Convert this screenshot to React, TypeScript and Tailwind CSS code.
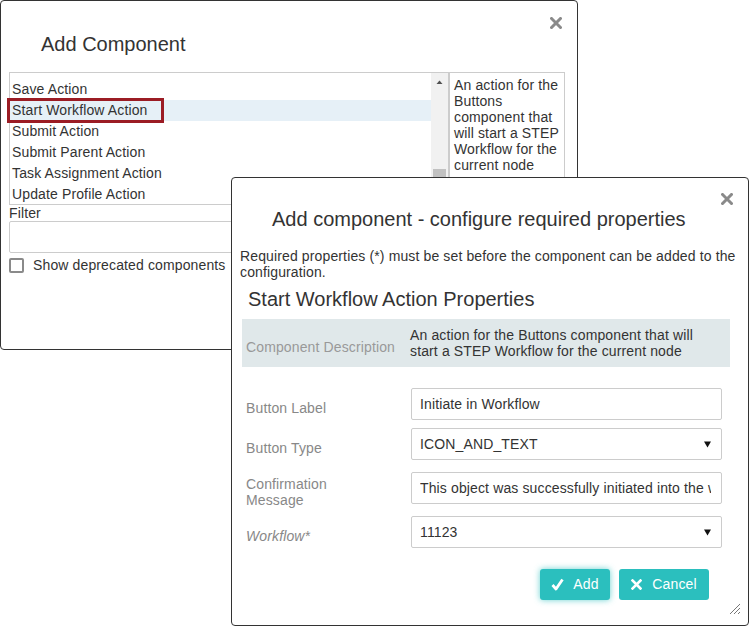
import React from "react";

const font = { fontFamily: '"Liberation Sans", Arial, sans-serif' };

function CloseIcon() {
  return (
    <svg width="12" height="12" viewBox="0 0 12 12" className="block">
      <path d="M1.5 1.5 L10.5 10.5 M10.5 1.5 L1.5 10.5" stroke="#8a8a8a" strokeWidth="3" strokeLinecap="square" />
    </svg>
  );
}

function Caret() {
  return (
    <svg width="7" height="7" viewBox="0 0 7 7" className="block">
      <path d="M0 0.5 H7 L3.5 6.5 Z" fill="#111" />
    </svg>
  );
}

const items = ["Run Business Action", "Save Action", "Start Workflow Action", "Submit Action", "Submit Parent Action", "Task Assignment Action", "Update Profile Action"];

function FormRow({ label, children, italic = false }: { label: React.ReactNode; children: React.ReactNode; italic?: boolean }) {
  return (
    <div className="flex items-center">
      <div className={`w-[169px] pl-[4px] pt-2 text-[14px] leading-[16px] text-[#888] ${italic ? "italic" : ""}`}>{label}</div>
      <div className="w-[311px]">{children}</div>
    </div>
  );
}

function TextBox({ value, select = false }: { value: string; select?: boolean }) {
  return (
    <div className="flex h-[32px] items-center overflow-hidden whitespace-nowrap rounded-[2px] border border-[#ccc] bg-white pl-[8px] pr-[10px] text-[14px] text-[#333]">
      <span className="flex-1 overflow-hidden">{value}</span>
      {select && <Caret />}
    </div>
  );
}

export default function App() {
  return (
    <div className="relative h-[626px] w-[749px] overflow-hidden bg-white tracking-[0.13px] text-[#333]" style={font}>
      {/* first dialog */}
      <div className="absolute left-0 top-0 h-[350px] w-[578px] rounded border border-[#333] bg-white">
        <div className="absolute right-[15px] top-[16px]">
          <CloseIcon />
        </div>
        <h1 className="pl-[40px] pt-[29px] text-[20px] leading-[28px] tracking-normal">Add Component</h1>

        <div className="ml-[8px] mt-[14px] flex">
          <div className="relative h-[133px] w-[440px] overflow-hidden border border-[#ccc]">
            <div className="-mt-[15px] mr-[17px]">
              {items.map((it) => (
                <div
                  key={it}
                  className={`h-[21px] pl-[2px] text-[14px] leading-[20px] ${it === "Start Workflow Action" ? "bg-[#e6f0f7]" : ""}`}
                >
                  {it}
                </div>
              ))}
            </div>
            <div className="absolute bottom-0 right-0 top-0 w-[17px] bg-[#f1f1f1]">
              <svg width="17" height="12" viewBox="0 0 17 12" className="mt-[3px] block">
                <path d="M5.5 8 L8.5 4.5 L11.5 8 Z" fill="#505050" />
              </svg>
              <div className="absolute left-[2px] top-[96px] h-[40px] w-[13px] bg-[#c1c1c1]" />
            </div>
          </div>
          <div className="h-[133px] w-[116px] border border-[#ccc] pl-[4px] pt-[4px] text-[14px] leading-[16px]">
            An action for the Buttons component that will start a STEP Workflow for the current node
          </div>
        </div>

        <div className="ml-[8px] text-[14px] leading-[16px]">Filter</div>
        <div className="ml-[8px] h-[32px] w-[556px] rounded-[2px] border border-[#ccc]" />
        <div className="ml-[8px] mt-[4px] flex items-center gap-[9px] text-[14px] leading-[16px]">
          <span className="h-[15px] w-[15px] rounded-[2px] border-2 border-[#8a8a8a]" />
          <span>Show deprecated components</span>
        </div>

        {/* selection annotation */}
        <div className="absolute left-[6px] top-[97px] h-[25px] w-[157px] border-[3px] border-[#9b1c24]" />
      </div>

      {/* second dialog */}
      <div className="absolute left-[231px] top-[177px] h-[449px] w-[518px] rounded border border-[#333] bg-white">
        <div className="absolute right-[15px] top-[15px]">
          <CloseIcon />
        </div>
        <h2 className="pl-[40px] pt-[27px] text-[20px] leading-[28px] tracking-normal">Add component - configure required properties</h2>
        <p className="mt-[15px] w-[508px] pl-[8px] text-[14px] leading-[16px]">
          Required properties (*) must be set before the component can be added to the configuration.
        </p>
        <h3 className="mt-[7px] pl-[16px] text-[20px] leading-[24px] tracking-normal">Start Workflow Action Properties</h3>

        <div className="ml-[10px] mt-[8px] flex h-[48px] w-[488px] items-center bg-[#e0e8ea]">
          <div className="w-[168px] pl-[4px] pt-2 text-[14px] leading-[16px] text-[#999]">Component Description</div>
          <div className="w-[295px] text-[14px] leading-[16px]">
            An action for the Buttons component that will start a STEP Workflow for the current node
          </div>
        </div>

        <div className="ml-[10px] mt-[21px] flex flex-col gap-2">
          <FormRow label="Button Label">
            <TextBox value="Initiate in Workflow" />
          </FormRow>
          <FormRow label="Button Type">
            <TextBox value="ICON_AND_TEXT" select />
          </FormRow>
          <FormRow
            label={
              <>
                Confirmation
                <br />
                Message
              </>
            }
          >
            <TextBox value="This object was successfully initiated into the workflow" />
          </FormRow>
          <FormRow label="Workflow*" italic>
            <TextBox value="11123" select />
          </FormRow>
        </div>

        <div className="mt-[21px] flex justify-end gap-[9px] pr-[39px]">
          <button className="flex h-[31px] w-[70px] items-center justify-center gap-[9px] rounded-[3px] bg-[#2bbfbe] text-[14px] text-white shadow-[0_0_6px_rgba(43,191,190,0.7)]">
            <svg width="13" height="13" viewBox="0 0 13 13" className="block">
              <path d="M1.5 7 L5 11 L11.5 1.5" stroke="#fff" strokeWidth="2.8" fill="none" strokeLinejoin="round" />
            </svg>
            Add
          </button>
          <button className="flex h-[31px] w-[90px] items-center justify-center gap-[10px] rounded-[3px] bg-[#2bbfbe] text-[14px] text-white">
            <svg width="11" height="11" viewBox="0 0 11 11" className="block">
              <path d="M1.5 1.5 L9.5 9.5 M9.5 1.5 L1.5 9.5" stroke="#fff" strokeWidth="2.6" strokeLinecap="square" />
            </svg>
            Cancel
          </button>
        </div>

        <svg width="12" height="12" viewBox="0 0 12 12" className="absolute bottom-[10px] right-[7px]">
          <path d="M11 1 L1 11 M11 5 L5 11 M11 9 L9 11" stroke="#777" strokeWidth="1" />
        </svg>
      </div>
    </div>
  );
}
